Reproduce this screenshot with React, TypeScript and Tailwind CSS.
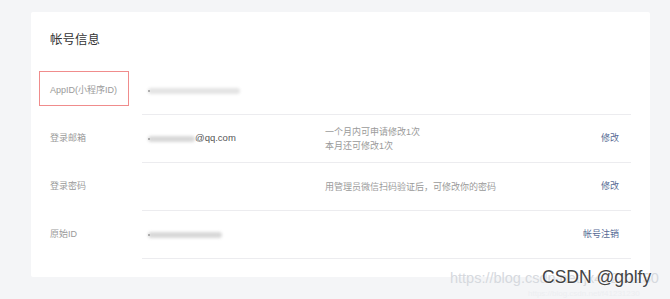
import React from "react";

const Row = ({
  label,
  value,
  note,
  action,
}: {
  label: string;
  value?: React.ReactNode;
  note?: React.ReactNode;
  action?: string;
}) => (
  <div className="flex h-[48px]">
    <div className="w-[92px] shrink-0 flex items-center text-[9px] text-[#9a9a9a]">{label}</div>
    <div className="flex-1 flex items-center border-b border-[#ececef] pl-[6px] pr-[12px]">
      <div className="w-[177px] shrink-0 flex items-center">{value}</div>
      <div className="flex-1 text-[9px] leading-[14px] text-[#9a9a9a]">{note}</div>
      {action && <div className="text-[9px] text-[#576b95]">{action}</div>}
    </div>
  </div>
);

const Blur = ({ w, dark = false }: { w: number; dark?: boolean }) => (
  <div className="relative h-[8px] flex items-center" style={{ width: w }}>
    <div
      className={`h-[6px] w-full rounded-sm ${dark ? "bg-[#d8d8d8]" : "bg-[#e4e4e4]"} blur-[1.5px]`}
    />
    <div className="absolute left-0 top-[3px] h-[2px] w-[2px] rounded-full bg-[#9a9a9a]" />
  </div>
);

export default function App() {
  return (
    <div
      className="relative w-[670px] h-[299px] bg-[#f4f5f7] pt-[12px] pl-[31px] overflow-hidden"
      style={{ fontFamily: '"Liberation Sans", "Noto Sans CJK SC", sans-serif' }}
    >
      <div className="relative w-[619px] h-[265px] bg-white rounded-[2px] pt-[18px] px-[19px]">
        <div className="h-[20px] leading-[20px] text-[12.5px] text-[#353535] mb-[18px]">帐号信息</div>
        <div className="-mt-px">
          <Row label="AppID(小程序ID)" value={<Blur w={92} />} />
          <Row
            label="登录邮箱"
            value={
              <div className="flex items-center">
                <Blur w={47} dark />
                <span className="text-[9.5px] text-[#555]">@qq.com</span>
              </div>
            }
            note={
              <>
                <div>一个月内可申请修改1次</div>
                <div>本月还可修改1次</div>
              </>
            }
            action="修改"
          />
          <Row label="登录密码" note="用管理员微信扫码验证后，可修改你的密码" action="修改" />
          <Row label="原始ID" value={<Blur w={74} dark />} action="帐号注销" />
        </div>
        <div className="absolute left-[8px] top-[59px] w-[90px] h-[35px] border border-[#f08c8c]" />
      </div>
      <div className="absolute left-[450px] top-[269px] text-[14.5px] leading-[18px] text-[#d6d9de] whitespace-nowrap">
        https://blog.csdn.net/jx41231230
      </div>
      <div className="absolute left-[528px] top-[289px] text-[8px] leading-[10px] text-[#eceef1] whitespace-nowrap">
        https://blog.csdn.net/f41231230
      </div>
      <div
        className="absolute left-[542px] top-[266px] text-[17.5px] leading-[22px] text-[#444] whitespace-nowrap"
        style={{ textShadow: "0 0 2px #fff, 0 0 2px #fff" }}
      >
        CSDN @gblfy
      </div>
    </div>
  );
}
